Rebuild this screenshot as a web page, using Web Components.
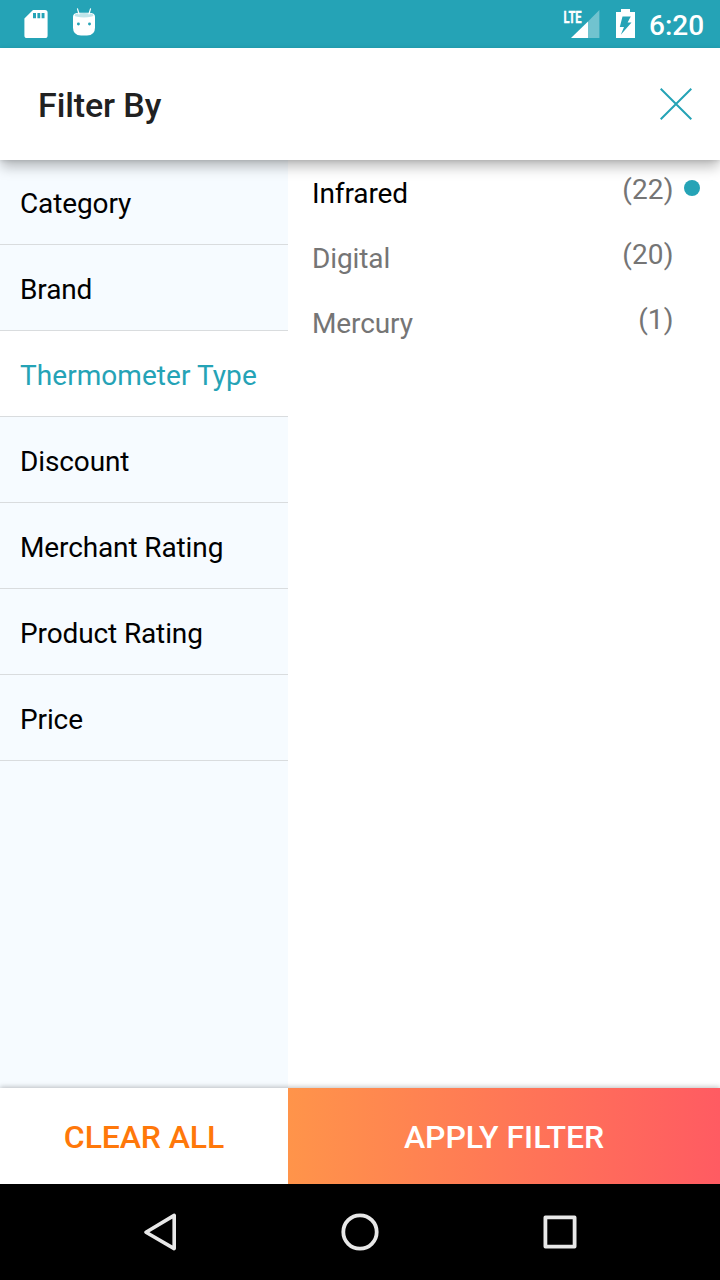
<!DOCTYPE html>
<html lang="en">
<head>
<meta charset="utf-8">
<title>Filter By</title>
<style>
html,body{margin:0;padding:0}
body{width:720px;height:1280px;overflow:hidden;font-family:Roboto,"Noto Sans",sans-serif;background:#fff}
</style>
</head>
<body>
<filter-screen></filter-screen>
<script>
const define = (name, html) => customElements.define(name, class extends HTMLElement {
  constructor() {
    super();
    this.attachShadow({ mode: "open" }).innerHTML = html;
  }
});

define("status-bar", `
<style>
:host{display:flex;height:48px;background:#25a3b6;color:#fff;box-sizing:border-box;padding-right:16px}
svg{display:block;flex:none}
.gap{flex:1}
.time{width:55px;font-size:28px;font-weight:500;line-height:46px;padding-top:3px;margin-left:9px;white-space:nowrap}
</style>
<svg width="120" height="48" viewBox="0 0 120 48">
  <path fill="#fff" fill-rule="evenodd" d="M33 10H45a2.6 2.6 0 0 1 2.6 2.6V35.4A2.6 2.6 0 0 1 45 38H27a2.6 2.6 0 0 1-2.6-2.6V18.6ZM33 13V18.2H36V13ZM37.4 13V18.2H40.2V13ZM41.6 13V18.2H44.5V13Z"/>
  <path fill="#fff" d="M73 16.5Q73 13 79 12.7H89Q95 13 95 16.5V27.5Q95 35.4 87 35.4H81Q73 35.4 73 27.5Z"/>
  <ellipse cx="84" cy="15.2" rx="9.5" ry="2.3" fill="#c1e5ea"/>
  <path d="M77.5 8.8 79 14M90.5 8.8 89 14" stroke="#fff" stroke-width="1.2" stroke-linecap="round"/>
  <circle cx="78.4" cy="24" r="1.45" fill="#25a3b6"/><circle cx="89.5" cy="24" r="1.45" fill="#25a3b6"/>
</svg>
<span class="gap"></span>
<svg width="80" height="48" viewBox="560 0 80 48">
  <text transform="translate(563.6 22.5) scale(.66 1)" font-size="17" font-weight="700" fill="#fff" stroke="#fff" stroke-width=".4">LTE</text>
  <path fill="#fff" fill-opacity=".35" d="M588 21.5 599.4 10V38H588Z"/>
  <path fill="#fff" d="M588 21.5V38H571Z"/>
  <path fill="#fff" d="M621 9H630V12H635V38H616V12H621Z"/>
  <path fill="#25a3b6" d="M622.5 16.5H630.8L627.6 22.4H631.5L620.8 34.8 624 27H619.8Z"/>
</svg>
<span class="time">6:20</span>`);

define("title-bar", `
<style>
:host{display:flex;position:relative;z-index:2;height:112px;align-items:center;justify-content:space-between;box-sizing:border-box;padding:0 28px 0 38px;background:#fff;box-shadow:0 8px 12px -1px rgba(0,0,0,.26),0 1px 4px rgba(0,0,0,.12)}
h1{margin:2px 0 0;font-size:34px;font-weight:500;line-height:40px;letter-spacing:-.1px;color:#212121}
svg{display:block}
</style>
<h1><slot></slot></h1>
<svg width="32" height="32" viewBox="0 0 32 32"><path d="M.7.7 31.3 31.3M31.3.7.7 31.3" stroke="#25a3b6" stroke-width="2"/></svg>`);

define("filter-tab", `
<style>
:host{display:block;height:86px;box-sizing:border-box;padding:28px 20px 0;border-bottom:1px solid #d9dcde;font-size:28px;line-height:34px;letter-spacing:-.12px;color:#000;white-space:nowrap}
:host([selected]){background:#fff;color:#25a3b6;letter-spacing:.06px}
</style><slot></slot>`);

define("filter-option", `
<style>
:host{display:flex;height:65px;font-size:28px;line-height:34px;color:#757575}
.label{flex:1;padding-top:17px;letter-spacing:-.12px}
:host([selected]) .label{color:#000}
.count{padding-top:13px;letter-spacing:.1px}
.dot{width:16px;height:16px;border-radius:50%;margin:20px 20px 0 10.5px}
:host([selected]) .dot{background:#25a3b6}
</style>
<span class="label"><slot></slot></span><span class="count"><slot name="count"></slot></span><span class="dot"></span>`);

define("action-button", `
<style>
:host{display:flex;align-items:center;justify-content:center;box-sizing:border-box;padding-top:2px;background:#fff;color:#ff780a;font-size:32px;font-weight:500;line-height:38px;letter-spacing:-.12px}
:host([primary]){background:linear-gradient(90deg,#ff944a,#ff5b62);color:#fff;letter-spacing:-.04px}
</style><slot></slot>`);

define("navigation-bar", `
<style>
:host{display:flex;height:96px;background:#000;justify-content:center;gap:160px;align-items:center}
svg{display:block}
</style>
<svg width="40" height="40" viewBox="0 0 40 40" fill="none" stroke="#e8e8e8" stroke-width="3.6" stroke-linejoin="round"><path d="M34.2 3.4V36.6L6 20.2Z"/></svg>
<svg width="40" height="40" viewBox="0 0 40 40" fill="none" stroke="#e8e8e8" stroke-width="3.8"><circle cx="20" cy="20" r="16.7"/></svg>
<svg width="40" height="40" viewBox="0 0 40 40" fill="none" stroke="#e8e8e8" stroke-width="3.8" stroke-linejoin="round"><rect x="5.4" y="5.4" width="29.2" height="29.2"/></svg>`);

define("filter-screen", `
<style>
:host{display:flex;flex-direction:column;width:720px;height:1280px}
main{flex:1;display:grid;grid-template-columns:288px 1fr;min-height:0}
nav{background:#f6fbff}
nav filter-tab:first-child{height:85px;padding-top:27px}
.options{padding-left:24px}
footer{position:relative;z-index:1;height:96px;display:grid;grid-template-columns:288px 1fr;box-shadow:0 -1px 5px rgba(0,0,0,.25)}
navigation-bar{position:relative;z-index:2}
</style>
<status-bar></status-bar>
<title-bar>Filter By</title-bar>
<main>
  <nav>
    <filter-tab>Category</filter-tab>
    <filter-tab>Brand</filter-tab>
    <filter-tab selected>Thermometer Type</filter-tab>
    <filter-tab>Discount</filter-tab>
    <filter-tab>Merchant Rating</filter-tab>
    <filter-tab>Product Rating</filter-tab>
    <filter-tab>Price</filter-tab>
  </nav>
  <div class="options">
    <filter-option selected>Infrared<span slot="count">(22)</span></filter-option>
    <filter-option>Digital<span slot="count">(20)</span></filter-option>
    <filter-option>Mercury<span slot="count">(1)</span></filter-option>
  </div>
</main>
<footer>
  <action-button>CLEAR ALL</action-button>
  <action-button primary>APPLY FILTER</action-button>
</footer>
<navigation-bar></navigation-bar>`);
</script>
</body>
</html>
